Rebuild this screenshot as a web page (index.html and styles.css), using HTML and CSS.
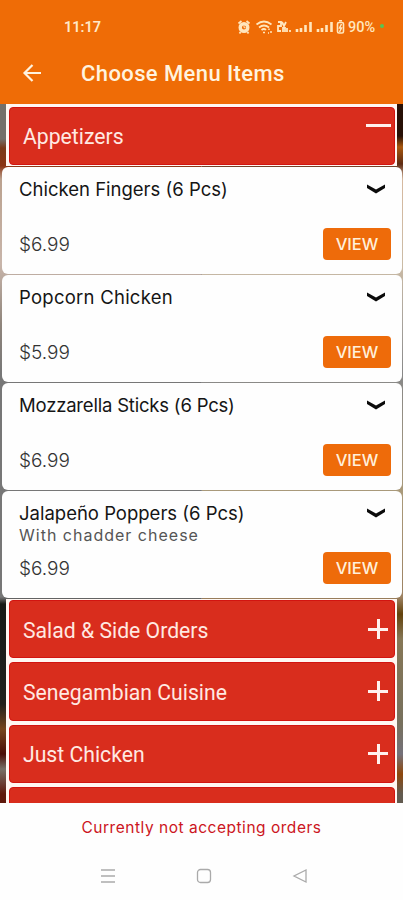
FILE: index.html
```html
<!DOCTYPE html>
<html lang="en">
<head>
  <meta charset="UTF-8">
  <title>Choose Menu Items</title>
  <link rel="stylesheet" href="styles.css">
</head>
<body>
  <header>
    <div class="status">
      <span class="time">11:17</span>
      <svg class="status-icons" width="108" height="18" viewBox="0 0 108 18" fill="none" stroke="#ffe6bd">
        <circle cx="7" cy="9.5" r="3.8" stroke-width="3.4"/>
        <path d="M1.5 5.5l3-2.5M12.5 5.5l-3-2.5M3.5 14l-1 1.5M10.5 14l1 1.5" stroke-width="1.8"/>
        <path d="M7 7.5v2.2h1.5" stroke-width="1"/>
        <path d="M19.5 6.5q7.5-6 15 0M22 9.5q5-4 10 0M24.5 12q2.5-2 4.5 0" stroke-width="1.7"/>
        <path d="M26 14.5h2M32 10.5v1.5M34 13v2M31 15h1" stroke-width="1.5"/>
        <path d="M41 4h3v4h-3v5h3M45 4l2 4 2-4M46 14v-4h2v4M50 14v-4M53 14v-2" stroke-width="1.8"/>
        <path d="M60 14v-3M64 14v-4M68.5 14V7M73.500 14V4M81 14v-3M85 14v-4M89.500 14V7M94.500 14V4" stroke-width="2.6"/>
        <rect x="100.500" y="4.500" width="6" height="10.500" rx="1.500" stroke-width="1.600"/>
        <path d="M102 2.800h3M104.500 6l-2 4h2l-2 4" stroke-width="1.500"/>
      </svg>
      <span class="battery">90%</span>
      <span class="dot"></span>
    </div>
    <div class="toolbar">
      <svg width="20" height="20" viewBox="0 0 20 20" fill="none" stroke="#fff3df" stroke-width="2.2"><path d="M19 10H3M10.500 2L2.500 10l8 8"/></svg>
      <h1>Choose Menu Items</h1>
    </div>
  </header>

  <main>
    <div class="group first">
      <div class="category open"><span>Appetizers</span><i class="minus"></i></div>
    </div>

    <div class="item">
      <div class="row"><h2>Chicken Fingers (6 Pcs)</h2><svg class="chevron" viewBox="0 0 20 10"><path d="M1 .5l9 5 9-5v3.500l-9 5.500-9-5.500z"/></svg></div>
      <p class="note"></p>
      <div class="row"><span class="price">$6.99</span><button>VIEW</button></div>
    </div>
    <div class="item">
      <div class="row"><h2 class="loose">Popcorn Chicken</h2><svg class="chevron" viewBox="0 0 20 10"><path d="M1 .5l9 5 9-5v3.500l-9 5.500-9-5.500z"/></svg></div>
      <p class="note"></p>
      <div class="row"><span class="price">$5.99</span><button>VIEW</button></div>
    </div>
    <div class="item">
      <div class="row"><h2 class="tight">Mozzarella Sticks (6 Pcs)</h2><svg class="chevron" viewBox="0 0 20 10"><path d="M1 .5l9 5 9-5v3.500l-9 5.500-9-5.500z"/></svg></div>
      <p class="note"></p>
      <div class="row"><span class="price">$6.99</span><button>VIEW</button></div>
    </div>
    <div class="item">
      <div class="row"><h2>Jalapeño Poppers (6 Pcs)</h2><svg class="chevron" viewBox="0 0 20 10"><path d="M1 .5l9 5 9-5v3.500l-9 5.500-9-5.500z"/></svg></div>
      <p class="note">With chadder cheese</p>
      <div class="row"><span class="price">$6.99</span><button>VIEW</button></div>
    </div>

    <div class="group">
      <div class="category"><span>Salad &amp; Side Orders</span><i class="plus"></i></div>
      <div class="category"><span>Senegambian Cuisine</span><i class="plus"></i></div>
      <div class="category"><span>Just Chicken</span><i class="plus"></i></div>
      <div class="category"></div>
    </div>
  </main>

  <footer>
    <p class="notice">Currently not accepting orders</p>
    <nav>
      <svg width="16" height="16" viewBox="0 0 16 16"><path d="M1 2h14M1 8h14M1 14h14"/></svg>
      <svg width="16" height="16" viewBox="0 0 16 16"><rect x="1.500" y="1.500" width="13" height="13" rx="3"/></svg>
      <svg width="16" height="16" viewBox="0 0 16 16"><path d="M14 2v12L2 8z"/></svg>
    </nav>
  </footer>
</body>
</html>
```

FILE: styles.css
```css
* {
  box-sizing: border-box;
}
body {
  margin: 0;
  height: 900px;
  display: flex;
  flex-direction: column;
  overflow: hidden;
  background: #fefefe;
  font-family: Inter, "Open Sans", sans-serif;
}
h1, h2, p {
  margin: 0;
}
header {
  height: 104px;
  flex: none;
  background: #ef6c06;
  color: #fff3df;
  font-family: Roboto, sans-serif;
}
.status {
  height: 52px;
  padding: 2px 0 0 64px;
  display: flex;
  align-items: center;
}
.time {
  width: 173px;
  font-size: 14.5px;
  font-weight: 600;
  color: #ffe9c8;
}
.battery {
  width: 31px;
  margin-left: 3px;
  font-size: 14.5px;
  font-weight: 500;
  color: #ffe6bd;
}
.dot {
  width: 4px;
  height: 4px;
  margin: -2px 0 0 1px;
  border-radius: 50%;
  background: #55c653;
}
.toolbar {
  height: 42px;
  padding-left: 22px;
  display: flex;
  align-items: center;
}
h1 {
  margin-left: 39px;
  font-size: 22px;
  font-weight: 500;
  letter-spacing: 0.4px;
}
main {
  height: 699px;
  flex: none;
  overflow: hidden;
  background:
    linear-gradient(#74706a 0 35px, #793a19 44px, #8b3515 62px, #bba28f 75px, #c8b5aa 160px, #8f857c 220px, #777 270px, #777 493px, #171916 500px, #20221d 600px, #75451c 625px, #4a0e08 650px, #777168 665px, #5e180c 690px) left / 50% 100% no-repeat,
    linear-gradient(#281006 0 32px, #a9580f 43px, #5e2b13 60px, #d6b99f 75px, #cbbba5 160px, #a8a39c 220px, #888 270px, #aa9a7a 390px, #9d8262 493px, #63420b 510px, #867756 535px, #77705d 620px, #74717a 650px, #8e470c 670px, #625b50 690px) right / 50% 100% no-repeat;
  background-color: #999;
}
.group {
  margin: 0 6px;
  padding: 1px 2px 0 3px;
  display: flex;
  flex-direction: column;
  gap: 4px;
  background: #fff7f2;
}
.group.first {
  height: 62px;
  margin-bottom: 1px;
  padding-top: 3px;
}
.category {
  height: 58.3px;
  flex: none;
  padding: 2px 6px 0 13px;
  display: flex;
  align-items: center;
  justify-content: space-between;
  border: 1px solid #d21410;
  border-radius: 4px;
  background: #d92d1d;
  color: #ffe9e2;
  font: 21.2px Roboto, sans-serif;
}
.open {
  height: 57.5px;
  padding-top: 1px;
}
.minus {
  align-self: flex-start;
  width: 25px;
  height: 3px;
  margin: 15px -3px 0 0;
  background: #fff1ee;
}
.plus {
  width: 20px;
  height: 20px;
  margin-top: -2px;
  background:
    linear-gradient(#fff1ee, #fff1ee) center / 100% 3px no-repeat,
    linear-gradient(#fff1ee, #fff1ee) center / 3px 100% no-repeat;
}
.item {
  height: 107px;
  margin: 0 1px 1px 2px;
  padding: 10px 11px 0 17px;
  border-radius: 6px;
  background: #fefefe;
}
.row {
  display: flex;
  align-items: center;
  justify-content: space-between;
}
h2 {
  font-size: 18.5px;
  font-weight: 400;
  line-height: 24px;
  color: #151515;
  white-space: nowrap;
}
.loose {
  letter-spacing: 0.25px;
}
.tight {
  letter-spacing: -0.2px;
}
.chevron {
  width: 20px;
  height: 10px;
  margin-right: 5px;
  fill: #0b0b0b;
}
.note {
  height: 17px;
  font-size: 16px;
  line-height: 21px;
  letter-spacing: 1px;
  color: #555;
}
.price {
  margin-top: 10px;
  font-size: 19px;
  font-weight: 300;
  color: #333;
}
button {
  width: 68px;
  height: 32px;
  margin-top: 10px;
  padding: 0;
  border: 0;
  border-radius: 4px;
  background: #ee6b0a;
  color: #fff0dc;
  font: 500 16.5px Inter, sans-serif;
}
footer {
  height: 97px;
  text-align: center;
}
.notice {
  padding-top: 15px;
  font-size: 15.5px;
  line-height: 20px;
  letter-spacing: 0.52px;
  color: #cc1521;
}
nav {
  margin-top: 30px;
  padding: 0 95px 0 100px;
  display: flex;
  justify-content: space-between;
}
nav svg {
  fill: none;
  stroke: #aaa;
  stroke-width: 1.3;
}
```
